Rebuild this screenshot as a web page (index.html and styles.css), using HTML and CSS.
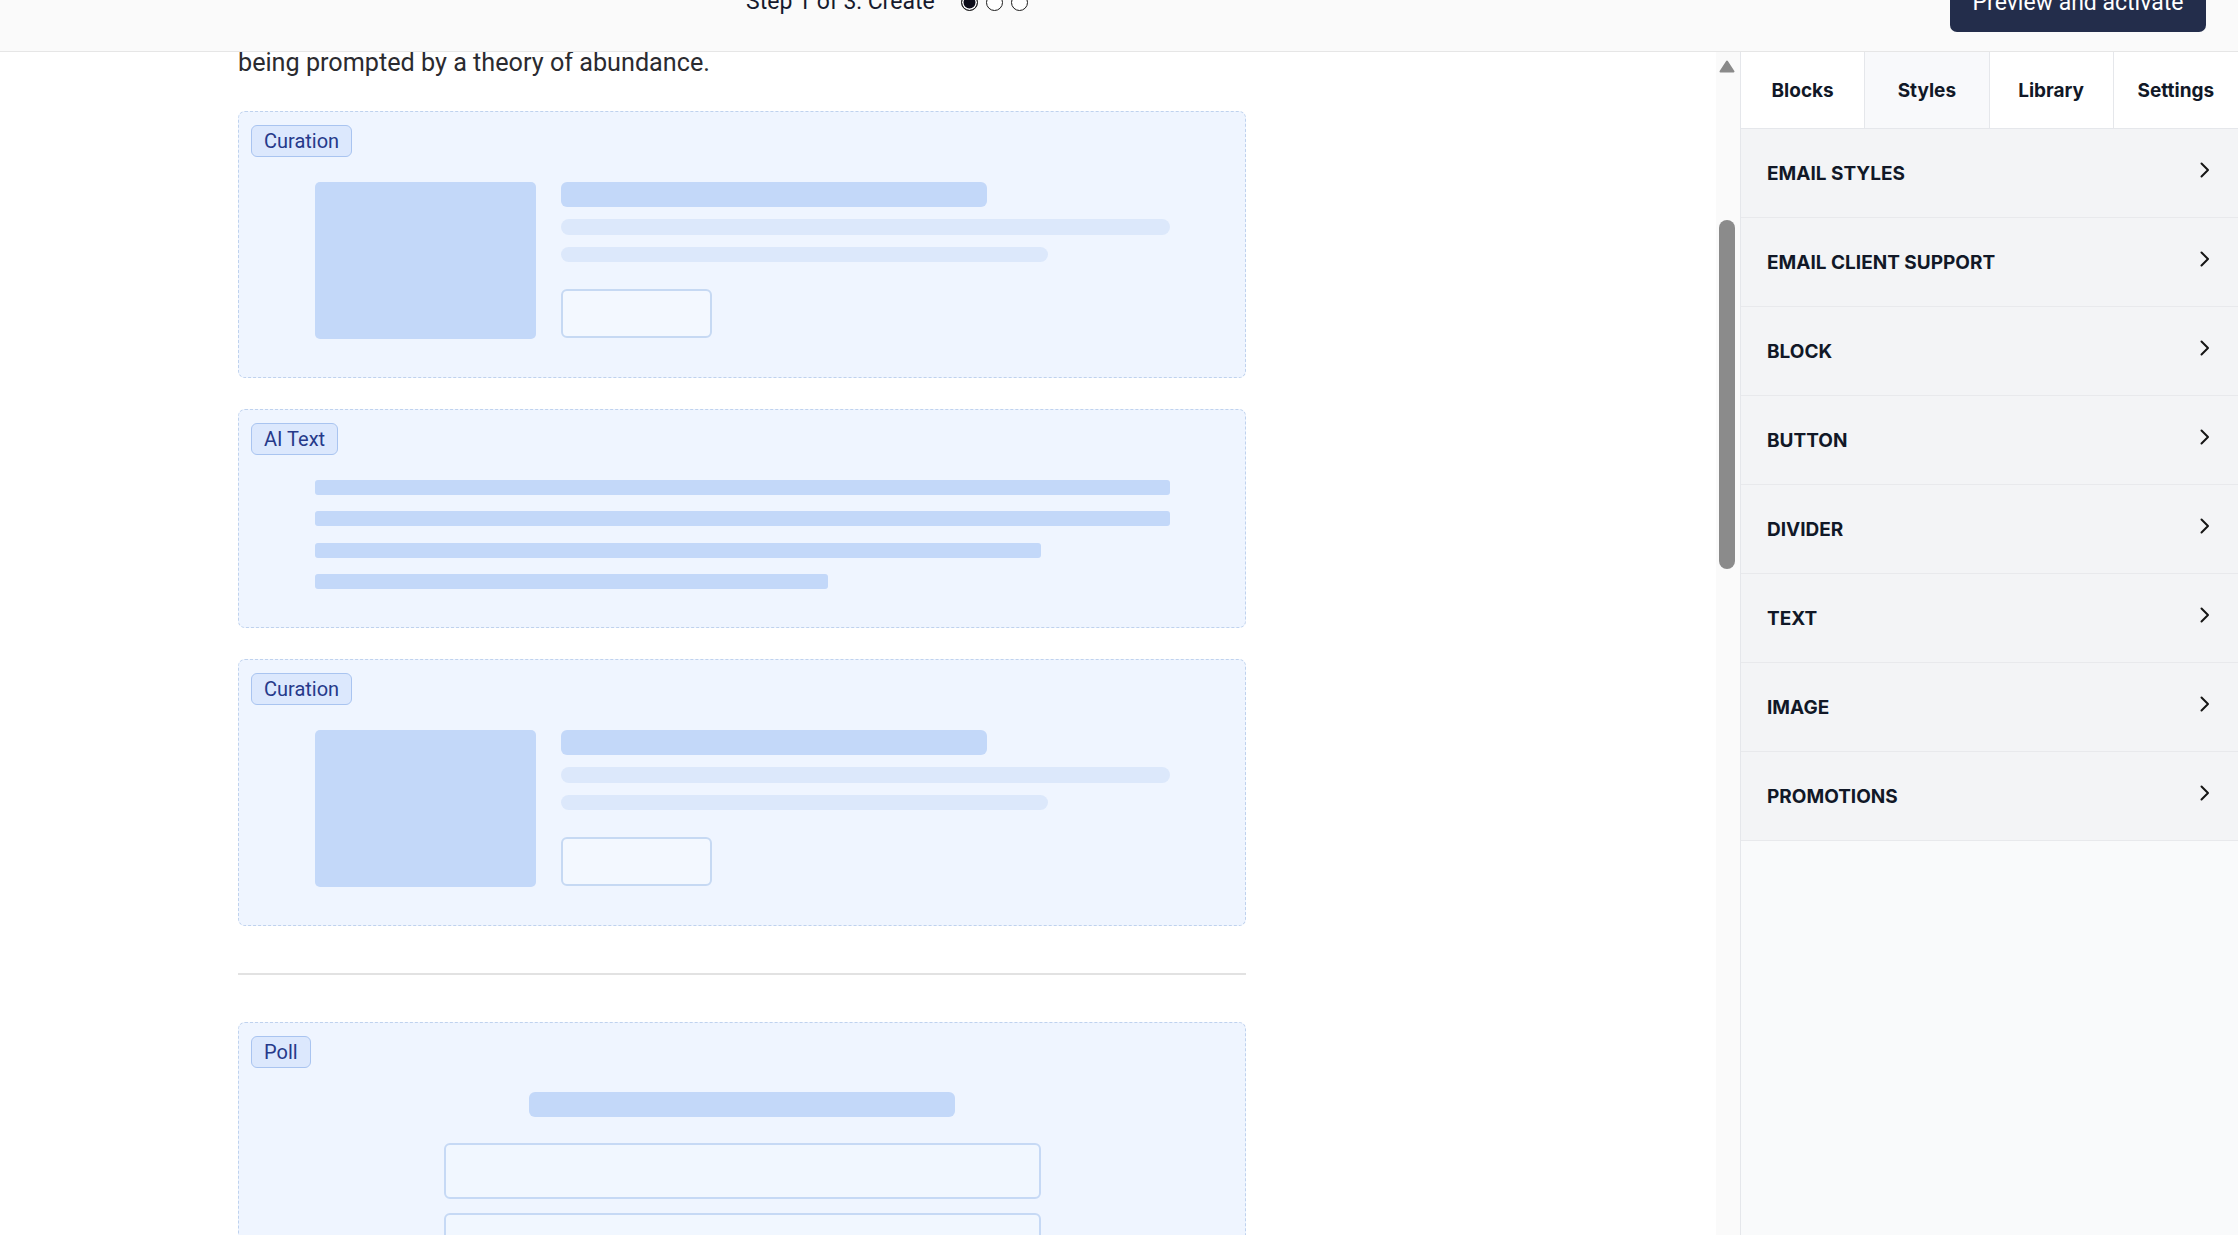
FILE: index.html
```html
<!DOCTYPE html>
<html lang="en">
<head>
<meta charset="utf-8">
<title>Create email</title>
<link rel="stylesheet" href="styles.css">
</head>
<body>
<div class="app">
  <header class="topbar">
    <div class="step">
      <span class="step-label">Step 1 of 3: Create</span>
      <span class="dots">
        <span class="dot dot-on"></span>
        <span class="dot"></span>
        <span class="dot"></span>
      </span>
    </div>
    <button class="primary" type="button">Preview and activate</button>
  </header>

  <div class="workspace">
    <main class="canvas">
      <div class="doc">
        <p class="intro">being prompted by a theory of abundance.</p>

        <section class="block">
          <span class="badge">Curation</span>
          <div class="curation">
            <div class="ph-image"></div>
            <div class="ph-body">
              <div class="ph-title"></div>
              <div class="ph-line ph-line-full"></div>
              <div class="ph-line ph-line-80"></div>
              <div class="ph-button"></div>
            </div>
          </div>
        </section>

        <section class="block">
          <span class="badge">AI Text</span>
          <div class="ai-text">
            <div class="ph-text"></div>
            <div class="ph-text"></div>
            <div class="ph-text ph-text-85"></div>
            <div class="ph-text ph-text-60"></div>
          </div>
        </section>

        <section class="block">
          <span class="badge">Curation</span>
          <div class="curation">
            <div class="ph-image"></div>
            <div class="ph-body">
              <div class="ph-title"></div>
              <div class="ph-line ph-line-full"></div>
              <div class="ph-line ph-line-80"></div>
              <div class="ph-button"></div>
            </div>
          </div>
        </section>

        <hr class="divider">

        <section class="block">
          <span class="badge">Poll</span>
          <div class="poll">
            <div class="ph-poll-title"></div>
            <div class="ph-option"></div>
            <div class="ph-option"></div>
            <div class="ph-option"></div>
          </div>
        </section>
      </div>
    </main>

    <div class="scrollbar">
      <svg class="scroll-up" width="16" height="13" viewBox="0 0 16 13"><polygon points="8,1.5 14.5,11.5 1.5,11.5" fill="#8a8a8a" stroke="#8a8a8a" stroke-width="2" stroke-linejoin="round"/></svg>
      <div class="thumb"></div>
    </div>

    <aside class="sidebar">
      <nav class="tabs">
        <div class="tab">Blocks</div>
        <div class="tab tab-active">Styles</div>
        <div class="tab">Library</div>
        <div class="tab">Settings</div>
      </nav>
      <ul class="sections">
        <li class="section"><span>EMAIL STYLES</span><svg class="chev" width="12" height="16" viewBox="0 0 12 16"><polyline points="2.5,1.5 9,8 2.5,14.5" fill="none" stroke="#151515" stroke-width="2" stroke-linecap="round" stroke-linejoin="round"/></svg></li>
        <li class="section"><span>EMAIL CLIENT SUPPORT</span><svg class="chev" width="12" height="16" viewBox="0 0 12 16"><polyline points="2.5,1.5 9,8 2.5,14.5" fill="none" stroke="#151515" stroke-width="2" stroke-linecap="round" stroke-linejoin="round"/></svg></li>
        <li class="section"><span>BLOCK</span><svg class="chev" width="12" height="16" viewBox="0 0 12 16"><polyline points="2.5,1.5 9,8 2.5,14.5" fill="none" stroke="#151515" stroke-width="2" stroke-linecap="round" stroke-linejoin="round"/></svg></li>
        <li class="section"><span>BUTTON</span><svg class="chev" width="12" height="16" viewBox="0 0 12 16"><polyline points="2.5,1.5 9,8 2.5,14.5" fill="none" stroke="#151515" stroke-width="2" stroke-linecap="round" stroke-linejoin="round"/></svg></li>
        <li class="section"><span>DIVIDER</span><svg class="chev" width="12" height="16" viewBox="0 0 12 16"><polyline points="2.5,1.5 9,8 2.5,14.5" fill="none" stroke="#151515" stroke-width="2" stroke-linecap="round" stroke-linejoin="round"/></svg></li>
        <li class="section"><span>TEXT</span><svg class="chev" width="12" height="16" viewBox="0 0 12 16"><polyline points="2.5,1.5 9,8 2.5,14.5" fill="none" stroke="#151515" stroke-width="2" stroke-linecap="round" stroke-linejoin="round"/></svg></li>
        <li class="section"><span>IMAGE</span><svg class="chev" width="12" height="16" viewBox="0 0 12 16"><polyline points="2.5,1.5 9,8 2.5,14.5" fill="none" stroke="#151515" stroke-width="2" stroke-linecap="round" stroke-linejoin="round"/></svg></li>
        <li class="section"><span>PROMOTIONS</span><svg class="chev" width="12" height="16" viewBox="0 0 12 16"><polyline points="2.5,1.5 9,8 2.5,14.5" fill="none" stroke="#151515" stroke-width="2" stroke-linecap="round" stroke-linejoin="round"/></svg></li>
      </ul>
    </aside>
  </div>
</div>
</body>
</html>
```

FILE: styles.css
```css
* { box-sizing: border-box; }

html, body {
  margin: 0;
  padding: 0;
  width: 2238px;
  height: 1235px;
  overflow: hidden;
  background: #ffffff;
  font-family: Roboto, "Liberation Sans", Arial, sans-serif;
}

.app {
  display: flex;
  flex-direction: column;
  height: 1235px;
}

/* ---------- top bar ---------- */
.topbar {
  flex: 0 0 52px;
  height: 52px;
  display: flex;
  align-items: flex-start;
  background: #fafafa;
  border-bottom: 1px solid #e6e6e6;
  overflow: hidden;
}

.step {
  display: flex;
  align-items: center;
  margin-left: 746px;
  margin-top: -12px;
  height: 28px;
}

.step-label {
  font-size: 23px;
  line-height: 28px;
  color: #161a2e;
}

.dots {
  display: flex;
  gap: 8px;
  margin-left: 26px;
  margin-top: 1px;
}

.dot {
  width: 17px;
  height: 17px;
  border-radius: 50%;
  border: 1.5px solid #1c1c1c;
  background: #ffffff;
}

.dot-on {
  background: #0d0d1a;
  box-shadow: inset 0 0 0 1.5px #ffffff;
}

.primary {
  margin-left: auto;
  margin-right: 32px;
  margin-top: -28px;
  width: 256px;
  height: 60px;
  border: 0;
  border-radius: 7px;
  background: #232d4b;
  color: #ffffff;
  font-family: Roboto, "Liberation Sans", Arial, sans-serif;
  font-size: 23px;
  padding: 0;
}

/* ---------- workspace ---------- */
.workspace {
  flex: 1;
  display: flex;
  min-height: 0;
}

.canvas {
  flex: 1;
  overflow: hidden;
  padding-left: 238px;
  background: #ffffff;
}

.doc {
  width: 1008px;
  margin-top: -7px;
}

.intro {
  margin: 0 0 30px;
  font-size: 25.2px;
  line-height: 36px;
  color: #2b2b30;
}

.block {
  display: flex;
  flex-direction: column;
  align-items: flex-start;
  border: 1px dashed #bfd2ee;
  border-radius: 7px;
  background: #eff5ff;
  padding: 13px 12px 38px;
  margin-bottom: 31px;
}

.badge {
  display: inline-block;
  height: 32px;
  padding: 0 12px;
  border: 1px solid #a9c4f0;
  border-radius: 6px;
  background: #dce8fd;
  color: #26398a;
  font-size: 20px;
  line-height: 30px;
}

/* curation placeholder */
.curation {
  align-self: center;
  width: 855px;
  margin-top: 25px;
  display: flex;
  gap: 25px;
}

.ph-image {
  flex: 0 0 221px;
  height: 157px;
  border-radius: 5px;
  background: #c3d8f9;
}

.ph-body {
  flex: 1;
  display: flex;
  flex-direction: column;
}

.ph-title {
  width: 70%;
  height: 25px;
  border-radius: 6px;
  background: #c3d8f9;
}

.ph-line {
  height: 15px;
  border-radius: 8px;
  background: #dce8fb;
  margin-top: 12px;
}

.ph-line-full { width: 100%; height: 16px; }
.ph-line-80 { width: 80%; }

.ph-button {
  width: 151px;
  height: 49px;
  margin-top: 27px;
  border: 2px solid #c6d9f3;
  border-radius: 6px;
  background: #f3f8ff;
}

/* ai text placeholder */
.ai-text {
  align-self: center;
  width: 855px;
  margin-top: 25px;
  display: flex;
  flex-direction: column;
  gap: 16.3px;
}

.ph-text {
  width: 100%;
  height: 15px;
  border-radius: 3px;
  background: #c3d8f9;
}

.ph-text-85 { width: 85%; }
.ph-text-60 { width: 60%; }

/* divider */
.divider {
  border: 0;
  height: 2px;
  background: #e2e2e2;
  margin: 47px 0 47px;
}

/* poll placeholder */
.poll {
  align-self: stretch;
  margin-top: 24px;
  display: flex;
  flex-direction: column;
  align-items: center;
}

.ph-poll-title {
  width: 426px;
  height: 25px;
  border-radius: 6px;
  background: #c3d8f9;
  margin-bottom: 26px;
}

.ph-option {
  width: 597px;
  height: 56px;
  border: 2px solid #c6d9f5;
  border-radius: 6px;
  background: #f1f7ff;
  margin-bottom: 14px;
}

/* ---------- fake scrollbar ---------- */
.scrollbar {
  flex: 0 0 24px;
  display: flex;
  flex-direction: column;
  align-items: flex-start;
  padding-left: 3px;
  background: #fafafa;
}

.scroll-up {
  margin-top: 8px;
}

.thumb {
  width: 16px;
  height: 349px;
  margin-top: 147px;
  border-radius: 8px;
  background: #8b8b8b;
}

/* ---------- sidebar ---------- */
.sidebar {
  flex: 0 0 498px;
  border-left: 1px solid #e5e7eb;
  background: #f9fafb;
  display: flex;
  flex-direction: column;
  font-family: Inter, "Noto Sans", "Liberation Sans", sans-serif;
  color: #111827;
}

.tabs {
  display: grid;
  grid-template-columns: repeat(4, 1fr);
  height: 77px;
  background: #ffffff;
  border-bottom: 1px solid #e5e7eb;
}

.tab {
  display: flex;
  align-items: center;
  justify-content: center;
  font-size: 19px;
  font-weight: 700;
  border-right: 1px solid #e5e7eb;
}

.tab:last-child { border-right: 0; }

.tab-active { background: #f8f9fb; }

.sections {
  list-style: none;
  margin: 0;
  padding: 0;
}

.section {
  display: flex;
  align-items: center;
  justify-content: space-between;
  height: 89px;
  padding: 0 27px 0 26px;
  background: #f3f4f6;
  border-bottom: 1px solid #e8e9ec;
  font-size: 19px;
  font-weight: 700;
}

.chev {
  margin-top: -6px;
}
```
